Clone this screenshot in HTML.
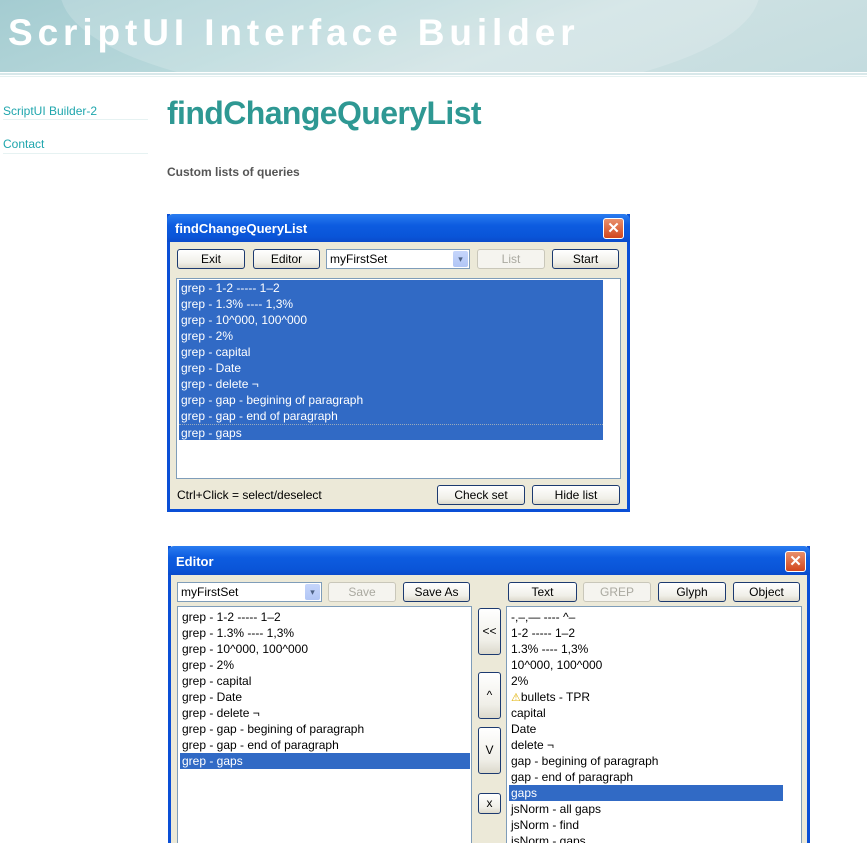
<!DOCTYPE html>
<html><head><meta charset="utf-8"><style>
*{margin:0;padding:0;box-sizing:border-box}
html,body{width:867px;height:843px;overflow:hidden}
body{background:#fff;font-family:"Liberation Sans",sans-serif;position:relative}
.a{position:absolute}
#hdr{left:0;top:0;width:867px;height:72px;background:linear-gradient(160deg,#a4ccd1 0%,#b8d8db 35%,#cfe2e3 60%,#c4dcdf 100%);overflow:hidden}
#hdr .sw{position:absolute;left:60px;top:-120px;width:700px;height:220px;border-radius:50%;background:rgba(255,255,255,.18)}
#ttl{left:8px;top:12px;font-size:37px;font-weight:bold;color:#fff;letter-spacing:4.9px;white-space:nowrap}
.nav{left:3px;font-size:12px;color:#1fa6ad}
.ul{left:3px;width:145px;height:1px;background:#e6f2f2}
h1{position:absolute;left:167px;top:95px;font-size:32px;color:#2e9893;font-weight:bold;letter-spacing:-.6px}
.dlg{background:#ece9d8;border:3px solid #0a4fd6;border-top:none}
.tb{position:absolute;left:-3px;right:-3px;top:0;background:linear-gradient(#2a7cf0,#0d5ce0 40%,#0a55d8 80%,#0a4acb);color:#fff;font-weight:bold;font-size:13px;padding-left:8px;border-radius:6px 6px 0 0}
.x{position:absolute;width:21px;height:21px;border:1px solid #fff;border-radius:3px;background:linear-gradient(#e8906c,#d2461d);color:#fff;font-size:15px;text-align:center;line-height:19px;font-weight:bold}
.b{position:absolute;height:20px;border:1px solid #1c3a70;border-radius:3px;background:linear-gradient(#fff,#f0efe8 70%,#dcd9cc);font-size:12px;text-align:center;line-height:18px;color:#000}
.b.d{border-color:#c9c7ba;color:#aaa9a0;background:#f5f4ef}
.dd{position:absolute;height:20px;border:1px solid #7f9db9;background:#fff;font-size:12px;line-height:18px;padding-left:3px}
.dd i{position:absolute;right:1px;top:1px;width:15px;height:16px;background:linear-gradient(#c6d6fb,#b1c6f5);border-radius:2px;font-style:normal;font-size:9px;text-align:center;color:#4d6185;line-height:16px}
.lb{position:absolute;background:#fff;border:1px solid #7f9db9;font-size:12px;overflow:hidden}
.r{height:16px;line-height:16px;padding-left:2px;white-space:nowrap}
.s{background:#316ac5;color:#fff}
</style></head><body>
<div id="hdr" class="a"><div class="sw"></div></div>
<div class="a" style="left:0;top:73px;width:867px;height:2px;background:#d8e8ea"></div>
<div class="a" style="left:0;top:76px;width:867px;height:1px;background:#e4f0f0"></div>
<div id="ttl" class="a">ScriptUI Interface Builder</div>
<div class="a nav" style="top:104px">ScriptUI Builder-2</div>
<div class="a ul" style="top:119px"></div>
<div class="a nav" style="top:137px">Contact</div>
<div class="a ul" style="top:153px"></div>
<h1>findChangeQueryList</h1>
<div class="a" style="left:167px;top:165px;font-size:12px;font-weight:bold;color:#555">Custom lists of queries</div>

<div class="a dlg" style="left:167px;top:214px;width:463px;height:298px">
 <div class="tb" style="height:28px;line-height:30px">findChangeQueryList</div>
 <div class="x" style="left:433px;top:4px">✕</div>
 <div class="b" style="left:7px;top:35px;width:68px">Exit</div>
 <div class="b" style="left:83px;top:35px;width:67px">Editor</div>
 <div class="dd" style="left:156px;top:35px;width:144px">myFirstSet<i>▾</i></div>
 <div class="b d" style="left:307px;top:35px;width:68px">List</div>
 <div class="b" style="left:382px;top:35px;width:67px">Start</div>
 <div class="lb" style="left:6px;top:64px;width:445px;height:201px;padding:1px 0 0 2px">
  <div style="width:424px;color:#fff;background:#316ac5">
  <div class="r">grep - 1-2 ----- 1–2</div><div class="r">grep - 1.3% ---- 1,3%</div><div class="r">grep - 10^000, 100^000</div><div class="r">grep - 2%</div><div class="r">grep - capital</div><div class="r">grep - Date</div><div class="r">grep - delete ¬</div><div class="r">grep - gap - begining of paragraph</div><div class="r">grep - gap - end of paragraph</div><div class="r" style="border-top:1px dotted #9ab">grep - gaps</div></div>
 </div>
 <div class="a" style="left:7px;top:274px;font-size:12px">Ctrl+Click = select/deselect</div>
 <div class="b" style="left:267px;top:271px;width:88px">Check set</div>
 <div class="b" style="left:362px;top:271px;width:88px">Hide list</div>
</div>

<div class="a dlg" style="left:168px;top:546px;width:642px;height:310px">
 <div class="tb" style="height:29px;line-height:32px">Editor</div>
 <div class="x" style="left:614px;top:5px">✕</div>
 <div class="dd" style="left:6px;top:36px;width:145px">myFirstSet<i>▾</i></div>
 <div class="b d" style="left:157px;top:36px;width:68px">Save</div>
 <div class="b" style="left:232px;top:36px;width:67px">Save As</div>
 <div class="b" style="left:337px;top:36px;width:69px">Text</div>
 <div class="b d" style="left:412px;top:36px;width:68px">GREP</div>
 <div class="b" style="left:487px;top:36px;width:68px">Glyph</div>
 <div class="b" style="left:562px;top:36px;width:67px">Object</div>
 <div class="lb" style="left:6px;top:60px;width:295px;height:260px;padding:2px 0 0 2px">
  <div class="r">grep - 1-2 ----- 1–2</div><div class="r">grep - 1.3% ---- 1,3%</div><div class="r">grep - 10^000, 100^000</div><div class="r">grep - 2%</div><div class="r">grep - capital</div><div class="r">grep - Date</div><div class="r">grep - delete ¬</div><div class="r">grep - gap - begining of paragraph</div><div class="r">grep - gap - end of paragraph</div><div class="r s" style="width:290px">grep - gaps</div>
 </div>
 <div class="b" style="left:307px;top:62px;width:23px;height:47px;line-height:45px">&lt;&lt;</div>
 <div class="b" style="left:307px;top:126px;width:23px;height:47px;line-height:45px">^</div>
 <div class="b" style="left:307px;top:181px;width:23px;height:47px;line-height:45px">V</div>
 <div class="b" style="left:307px;top:247px;width:23px;height:21px">x</div>
 <div class="lb" style="left:335px;top:60px;width:296px;height:260px;padding:2px 0 0 2px">
  <div class="r">-,–,—  ----  ^–</div><div class="r">1-2 ----- 1–2</div><div class="r">1.3% ---- 1,3%</div><div class="r">10^000, 100^000</div><div class="r">2%</div><div class="r"><span style="color:#e0b000;font-size:11px">⚠</span>bullets - TPR</div><div class="r">capital</div><div class="r">Date</div><div class="r">delete ¬</div><div class="r">gap - begining of paragraph</div><div class="r">gap - end of paragraph</div><div class="r s" style="width:274px">gaps</div><div class="r">jsNorm - all gaps</div><div class="r">jsNorm - find</div><div class="r">jsNorm - gaps</div>
 </div>
</div>
</body></html>
